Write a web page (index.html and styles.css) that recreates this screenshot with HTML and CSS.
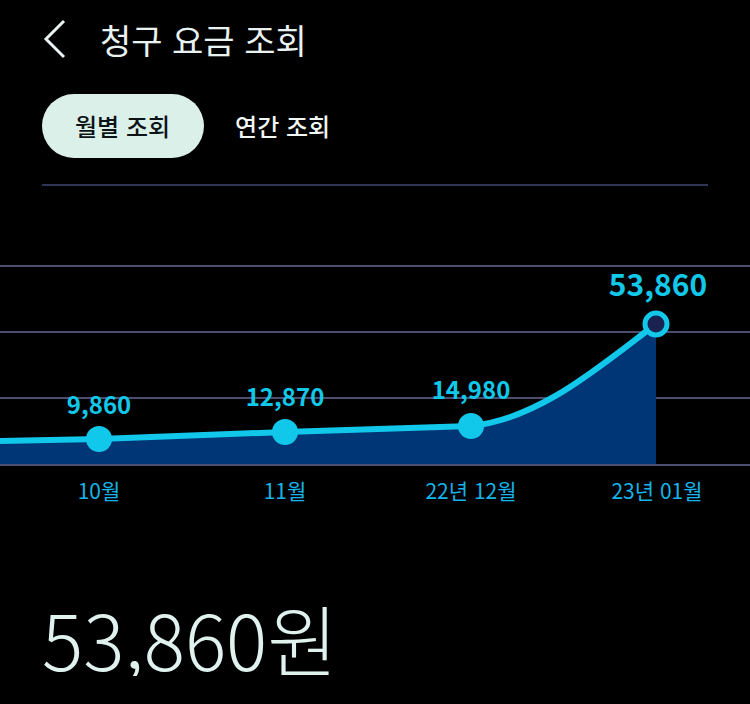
FILE: index.html
```html
<!DOCTYPE html>
<html lang="ko">
 <head>
  <meta charset="utf-8">
  <title>청구 요금 조회</title>
  <link rel="stylesheet" href="styles.css">
 </head>
 <body>
  <header class="topbar">
   <svg class="back" width="26" height="40" viewBox="0 0 26 40">
    <polyline points="22,2 4,20 22,38" fill="none" stroke="#e8f2f0" stroke-width="3"/>
   </svg>
   <h1 class="title">청구 요금 조회</h1>
  </header>

  <nav class="tabs">
   <span class="tab active">월별 조회</span>
   <span class="tab">연간 조회</span>
  </nav>
  <div class="divider"></div>

  <svg class="chart" width="750" height="280" viewBox="0 240 750 280">
   <g class="grid">
    <line x1="0" y1="265" x2="750" y2="265"/>
    <line x1="0" y1="331" x2="750" y2="331"/>
    <line x1="0" y1="397" x2="750" y2="397"/>
   </g>
   <path class="area" d="M0,440 L99,438 L285,431 L471,425 C540,418 600,365 656,323 L656,464 L0,464 Z"/>
   <line class="base" x1="0" y1="464" x2="750" y2="464"/>
   <path class="curve" d="M0,440 L99,438 L285,431 L471,425 C540,418 600,365 656,323"/>
   <circle class="dot" cx="99" cy="438" r="13"/>
   <circle class="dot" cx="285" cy="431" r="13"/>
   <circle class="dot" cx="471" cy="425" r="13"/>
   <circle class="dot-last" cx="656" cy="323" r="11"/>
   <text class="val" x="99" y="413">9,860</text>
   <text class="val" x="285" y="405">12,870</text>
   <text class="val" x="471" y="398">14,980</text>
   <text class="val big" x="658" y="295">53,860</text>
   <text class="month" x="99" y="498">10월</text>
   <text class="month" x="285" y="498">11월</text>
   <text class="month" x="471" y="498">22년 12월</text>
   <text class="month" x="657" y="498">23년 01월</text>
  </svg>

  <section class="total">
   <span class="amount">53,860원</span>
  </section>
 </body>
</html>
```

FILE: styles.css
```css
body {
    margin: 0;
    background: #000;
    color: #e8f2f0;
    font-family: "Noto Sans CJK KR", "Noto Sans", sans-serif;
}

.topbar {
    display: flex;
    align-items: center;
    height: 78px;
    padding-left: 42px;
}

.back {
    display: block;
    margin-right: 32px;
}

.title {
    margin: 0;
    font-size: 34px;
    font-weight: 400;
    letter-spacing: 0;
}

.tabs {
    display: flex;
    align-items: center;
    gap: 31px;
    padding: 16px 42px 0;
}

.tab {
    font-size: 24px;
    font-weight: 500;
    line-height: 64px;
    color: #f2f6f5;
}

.tab.active {
    background: #dcf0ea;
    color: #0d1417;
    border-radius: 32px;
    padding: 0 34px 0 33px;
}

.divider {
    height: 2px;
    background: #2f3458;
    margin: 26px 42px 0;
}

.chart {
    display: block;
    margin-top: 55px;
}

.grid line,
.base {
    stroke: #4a4f72;
    stroke-width: 2;
}

.area {
    fill: #003675;
}

.curve {
    fill: none;
    stroke: #12c8ea;
    stroke-width: 6;
    stroke-linejoin: round;
}

.dot {
    fill: #12c8ea;
}

.dot-last {
    fill: #1a2350;
    stroke: #12c8ea;
    stroke-width: 5;
}

.val {
    fill: #12c8ea;
    font-size: 24px;
    font-weight: 700;
    text-anchor: middle;
}

.val.big {
    font-size: 30px;
}

.month {
    fill: #16b4e8;
    font-size: 21px;
    text-anchor: middle;
}

.total {
    padding: 78px 42px 0;
}

.amount {
    font-size: 77px;
    font-weight: 300;
    color: #dff2ee;
    line-height: 1;
}
```
